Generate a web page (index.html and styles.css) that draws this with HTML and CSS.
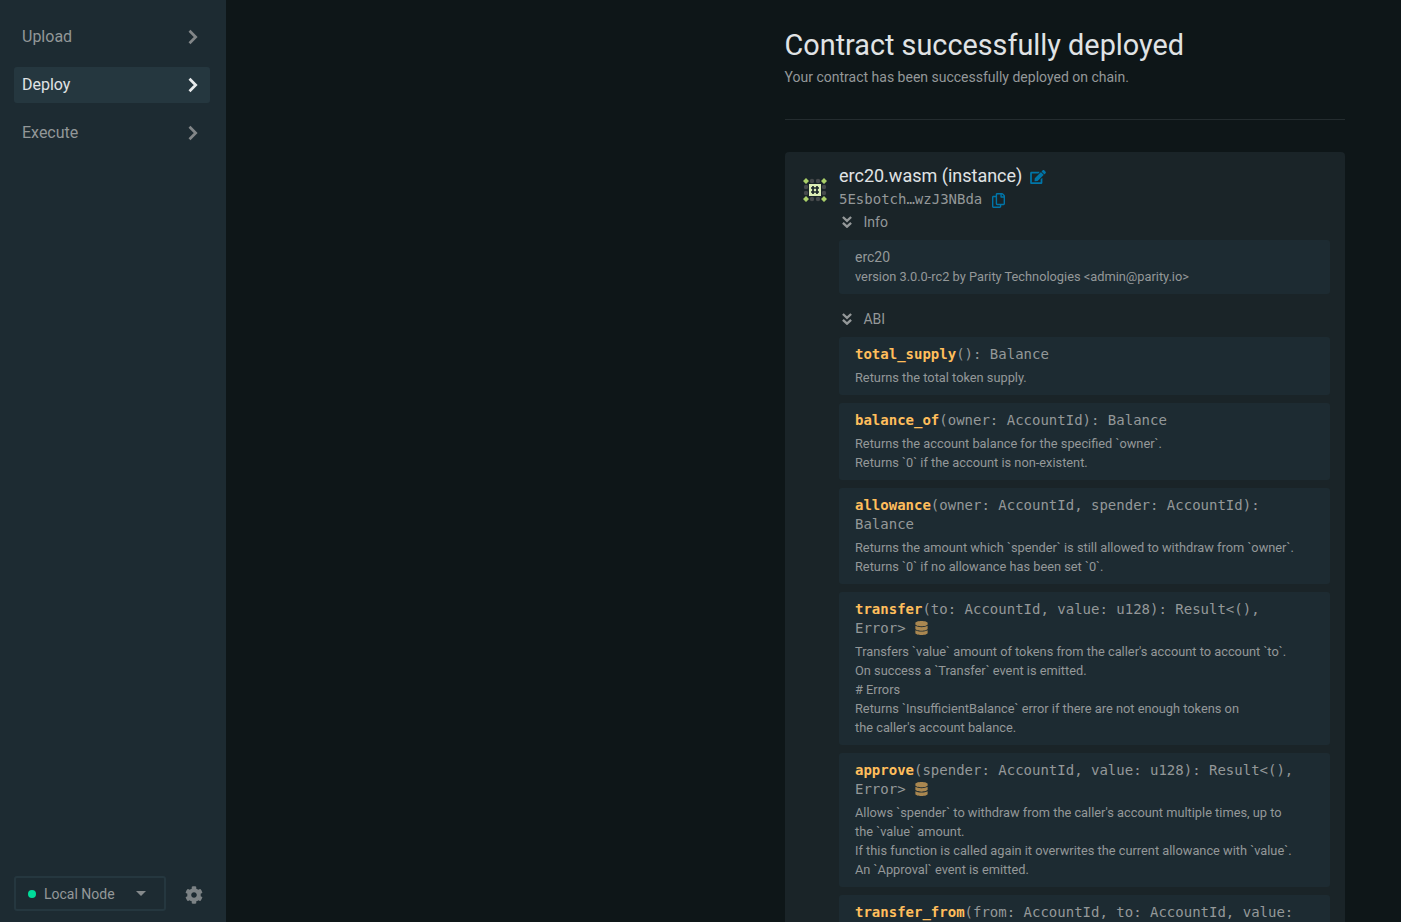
FILE: index.html
```
<!DOCTYPE html>
<html lang="en">
<head>
<meta charset="utf-8">
<title>Contract deployed</title>
<link rel="stylesheet" href="styles.css">
</head>
<body>
<svg width="0" height="0" class="defs">
  <symbol id="chevron" viewBox="0 0 10 16"><path d="M1.500 1.700 7.700 8l-6.200 6.300" fill="none" stroke="currentColor" stroke-width="2.700"/></symbol>
  <symbol id="double-down" viewBox="0 0 10 12"><path d="M.9 1 5 4.900 9.100 1M.9 6.800 5 10.700 9.100 6.800" fill="none" stroke="currentColor" stroke-width="2.300"/></symbol>
  <symbol id="database" viewBox="0 0 448 512"><path fill="currentColor" d="M448 73.143v45.714C448 159.143 347.667 192 224 192S0 159.143 0 118.857V73.143C0 32.857 100.333 0 224 0s224 32.857 224 73.143zM448 176v102.857C448 319.143 347.667 352 224 352S0 319.143 0 278.857V176c48.125 33.143 136.208 48.572 224 48.572S399.874 209.143 448 176zm0 160v102.857C448 479.143 347.667 512 224 512S0 479.143 0 438.857V336c48.125 33.143 136.208 48.572 224 48.572S399.874 369.143 448 336z"/></symbol>
</svg>
<div class="app">
  <aside class="sidebar">
    <nav class="nav">
      <a class="nav-item">Upload<svg class="chevron"><use href="#chevron"/></svg></a>
      <a class="nav-item active">Deploy<svg class="chevron"><use href="#chevron"/></svg></a>
      <a class="nav-item">Execute<svg class="chevron"><use href="#chevron"/></svg></a>
    </nav>
    <div class="footer">
      <div class="node"><span class="dot"></span><span class="label">Local Node</span><span class="caret"></span></div>
      <svg class="gear" viewBox="0 0 512 512"><path fill="currentColor" d="M487.400 315.700l-42.600-24.600c4.300-23.200 4.300-47 0-70.200l42.600-24.600c4.900-2.800 7.100-8.600 5.500-14-11.100-35.600-30-67.800-54.700-94.600-3.800-4.100-10-5.100-14.800-2.300L380.800 110c-17.900-15.400-38.500-27.300-60.800-35.100V25.800c0-5.600-3.900-10.500-9.400-11.700-36.700-8.200-74.300-7.800-109.200 0-5.500 1.200-9.400 6.100-9.400 11.700V75c-22.200 7.900-42.800 19.800-60.800 35.100L88.700 85.500c-4.900-2.800-11-1.900-14.800 2.300-24.700 26.700-43.600 58.900-54.700 94.600-1.700 5.400.6 11.200 5.500 14L67.300 221c-4.300 23.200-4.300 47 0 70.200l-42.600 24.600c-4.900 2.800-7.100 8.600-5.500 14 11.100 35.600 30 67.800 54.700 94.600 3.800 4.100 10 5.100 14.800 2.300l42.600-24.600c17.900 15.400 38.500 27.300 60.800 35.100v49.200c0 5.600 3.900 10.500 9.400 11.700 36.700 8.200 74.300 7.800 109.200 0 5.500-1.200 9.400-6.100 9.400-11.700v-49.200c22.200-7.900 42.800-19.800 60.800-35.100l42.600 24.600c4.900 2.800 11 1.900 14.800-2.300 24.700-26.700 43.600-58.900 54.700-94.600 1.500-5.500-.7-11.300-5.600-14.100zM256 336c-44.100 0-80-35.900-80-80s35.900-80 80-80 80 35.900 80 80-35.900 80-80 80z"/></svg>
    </div>
  </aside>
  <main class="main">
    <header class="header">
      <h1>Contract successfully deployed</h1>
      <p>Your contract has been successfully deployed on chain.</p>
    </header>
    <section class="card">
      <svg class="identicon" viewBox="0 0 24 24">
        <g fill="#464a4c"><circle cx="9" cy="3" r="2.200"/><circle cx="15" cy="3" r="2.200"/><circle cx="9" cy="21" r="2.200"/><circle cx="15" cy="21" r="2.200"/><circle cx="3" cy="9" r="2.200"/><circle cx="3" cy="15" r="2.200"/><circle cx="21" cy="9" r="2.200"/><circle cx="21" cy="15" r="2.200"/></g>
        <path fill="#a9cf68" d="M3 0l3 3-3 3-3-3zM21 0l3 3-3 3-3-3zM3 18l3 3-3 3-3-3zM21 18l3 3-3 3-3-3z"/>
        <path fill="#dcedb5" d="M6 6h12v12H6z"/>
        <path d="M8 10h8M8 14h8M10 8v8M14 8v8" stroke="#1a2428" stroke-width="1.700"/>
      </svg>
      <div class="details">
        <div class="name">erc20.wasm (instance)<svg class="edit" viewBox="0 0 576 512"><path fill="currentColor" d="M402.600 83.200l90.200 90.200c3.800 3.800 3.800 10 0 13.800L274.400 405.600l-92.800 10.300c-12.400 1.400-22.900-9.100-21.500-21.500l10.300-92.800L388.800 83.200c3.800-3.800 10-3.800 13.800 0zm162-22.900l-48.800-48.800c-15.200-15.200-39.900-15.200-55.200 0l-35.400 35.400c-3.800 3.800-3.800 10 0 13.800l90.200 90.200c3.800 3.800 10 3.800 13.800 0l35.400-35.400c15.200-15.300 15.200-40 0-55.200zM384 346.200V448H64V128h229.800c3.200 0 6.200-1.300 8.500-3.500l40-40c7.600-7.600 2.200-20.500-8.500-20.500H48C21.500 64 0 85.500 0 112v352c0 26.500 21.500 48 48 48h352c26.500 0 48-21.500 48-48V306.200c0-10.700-12.900-16-20.500-8.500l-40 40c-2.200 2.300-3.500 5.300-3.500 8.500z"/></svg></div>
        <div class="address">5Esbotch…wzJ3NBda<svg class="copy" viewBox="0 0 448 512"><path fill="currentColor" d="M433.941 65.941l-51.882-51.882A48 48 0 0 0 348.118 0H176c-26.510 0-48 21.490-48 48v48H48c-26.510 0-48 21.490-48 48v320c0 26.510 21.490 48 48 48h224c26.510 0 48-21.490 48-48v-48h80c26.510 0 48-21.490 48-48V99.882a48 48 0 0 0-14.059-33.941zM266 464H54a6 6 0 0 1-6-6V150a6 6 0 0 1 6-6h74v224c0 26.510 21.490 48 48 48h96v42a6 6 0 0 1-6 6zm128-96H182a6 6 0 0 1-6-6V54a6 6 0 0 1 6-6h106v88c0 13.255 10.745 24 24 24h88v202a6 6 0 0 1-6 6zm6-256h-64V48h9.632c1.591 0 3.117.632 4.243 1.757l48.368 48.368a6 6 0 0 1 1.757 4.243V112z"/></svg></div>
        <div class="toggle"><svg><use href="#double-down"/></svg>Info</div>
        <div class="box info"><div class="title">erc20</div><div class="doc">version 3.0.0-rc2 by Parity Technologies &lt;admin@parity.io&gt;</div></div>
        <div class="toggle abi"><svg><use href="#double-down"/></svg>ABI</div>
        <div class="messages">
          <div class="box"><div class="sig"><b>total_supply</b>(): Balance</div><div class="doc">Returns the total token supply.</div></div>
          <div class="box"><div class="sig"><b>balance_of</b>(owner: AccountId): Balance</div><div class="doc">Returns the account balance for the specified `owner`.<br>Returns `0` if the account is non-existent.</div></div>
          <div class="box"><div class="sig"><b>allowance</b>(owner: AccountId, spender: AccountId):<br>Balance</div><div class="doc">Returns the amount which `spender` is still allowed to withdraw from `owner`.<br>Returns `0` if no allowance has been set `0`.</div></div>
          <div class="box"><div class="sig"><b>transfer</b>(to: AccountId, value: u128): Result&lt;(),<br>Error&gt; <svg class="db"><use href="#database"/></svg></div><div class="doc">Transfers `value` amount of tokens from the caller's account to account `to`.<br>On success a `Transfer` event is emitted.<br># Errors<br>Returns `InsufficientBalance` error if there are not enough tokens on<br>the caller's account balance.</div></div>
          <div class="box"><div class="sig"><b>approve</b>(spender: AccountId, value: u128): Result&lt;(),<br>Error&gt; <svg class="db"><use href="#database"/></svg></div><div class="doc">Allows `spender` to withdraw from the caller's account multiple times, up to<br>the `value` amount.<br>If this function is called again it overwrites the current allowance with `value`.<br>An `Approval` event is emitted.</div></div>
          <div class="box"><div class="sig"><b>transfer_from</b>(from: AccountId, to: AccountId, value:</div></div>
        </div>
      </div>
    </section>
  </main>
</div>
</body>
</html>
```
FILE: styles.css
```
* { box-sizing: border-box; }
body { margin: 0; background: #0e1618; color: #949899; font: 14px/19px Roboto, sans-serif; overflow: hidden; }
.defs { display: block; }
.app { display: flex; height: 922px; overflow: hidden; }
.sidebar { width: 226px; flex: none; background: #1d2b32; padding: 19px 16px 11px 14px; display: flex; flex-direction: column; justify-content: space-between; }
.nav { display: flex; flex-direction: column; gap: 12px; }
.nav-item { height: 36px; padding: 0 12.500px 2px 8px; display: flex; align-items: center; justify-content: space-between; font-size: 16px; border-radius: 3px; color: #929798; }
.nav-item.active { background: #25373f; color: #e0e3e5; }
.chevron { width: 10px; height: 16px; margin-top: 2px; color: #828688; }
.active .chevron { color: #e8ebec; }
.footer { display: flex; align-items: center; gap: 20px; }
.node { width: 152px; height: 35px; border: 2px solid #25373f; border-radius: 3px; display: flex; align-items: center; padding-left: 12px; }
.label { padding-top: 2px; }
.dot { width: 8px; height: 8px; border-radius: 50%; background: #00dc9a; margin-right: 8px; }
.caret { margin-left: auto; margin-right: 18px; border: 5px solid transparent; border-top-color: #858a8c; border-bottom: 0; }
.gear { width: 18px; height: 18px; color: #7c8285; margin: 2px 0 0 -1px; }
.main { flex: 1; padding: 28px 56px 0 558.600px; }
.header { height: 92px; border-bottom: 1px solid #242c2f; }
h1 { margin: 0; font-size: 28.800px; line-height: 34px; font-weight: 400; color: #e0e3e5; }
p { margin: 6px 0 0; }
.card { margin-top: 32px; min-height: 900px; padding: 14px 15px 0 18.400px; background: #1a2428; border-radius: 4px; display: flex; gap: 12px; }
.identicon { width: 24px; height: 24px; margin-top: 12px; flex: none; }
.details { flex: 1; min-width: 0; }
.name { font-size: 18px; line-height: 20px; height: 22px; padding-bottom: 2px; color: #e0e3e5; display: flex; align-items: center; }
.edit { width: 16px; height: 14px; margin-left: 8px; margin-top: 2px; color: #0075a8; }
.address { height: 23px; font: 14px/23px "DejaVu Sans Mono", monospace; display: flex; align-items: center; }
.copy { width: 13px; height: 15px; margin-left: 10px; margin-top: 2px; color: #0075a8; }
.toggle { height: 29px; display: flex; align-items: flex-start; gap: 11px; padding: 2px 0 0 3.500px; }
.toggle svg { width: 10px; height: 12px; margin-top: 3px; }
.abi { height: 43px; padding-top: 16px; }
.box { background: #1d2b32; border-radius: 3px; padding: 8px 16px; }
.messages { display: flex; flex-direction: column; gap: 8px; }
.sig { font: 14px/19px "DejaVu Sans Mono", monospace; margin-bottom: 4px; white-space: nowrap; }
.sig b { color: #ffbe5c; }
.doc { font-size: 12.800px; line-height: 19px; white-space: nowrap; }
.db { width: 13px; height: 14px; color: #aa8750; vertical-align: -2px; margin-left: 1px; }
```
